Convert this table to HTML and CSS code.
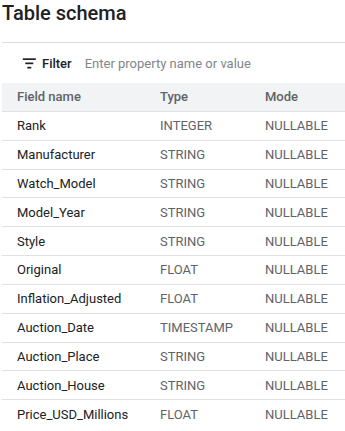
FILE: index.html
```html
<!DOCTYPE html>
<html>
<head>
<meta charset="utf-8">
<link rel="stylesheet" href="styles.css">
</head>
<body>
<h1 class="title">Table schema</h1>
<div class="schema">
  <div class="filter">
    <svg class="filter-icon" width="16" height="14" viewBox="0 0 16 14">
      <rect x="1.8" y="2.3" width="13" height="1.7" fill="#202124"/>
      <rect x="4.3" y="6.5" width="8" height="1.7" fill="#202124"/>
      <rect x="6.3" y="10.8" width="4" height="1.7" fill="#202124"/>
    </svg>
    <span class="filter-label">Filter</span>
    <span class="filter-input">Enter property name or value</span>
  </div>
  <div class="row head">
    <div class="cell">Field name</div>
    <div class="cell">Type</div>
    <div class="cell">Mode</div>
  </div>
  <div class="row"><div class="cell name">Rank</div><div class="cell">INTEGER</div><div class="cell">NULLABLE</div></div>
  <div class="row"><div class="cell name">Manufacturer</div><div class="cell">STRING</div><div class="cell">NULLABLE</div></div>
  <div class="row"><div class="cell name">Watch_Model</div><div class="cell">STRING</div><div class="cell">NULLABLE</div></div>
  <div class="row"><div class="cell name">Model_Year</div><div class="cell">STRING</div><div class="cell">NULLABLE</div></div>
  <div class="row"><div class="cell name">Style</div><div class="cell">STRING</div><div class="cell">NULLABLE</div></div>
  <div class="row"><div class="cell name">Original</div><div class="cell">FLOAT</div><div class="cell">NULLABLE</div></div>
  <div class="row"><div class="cell name">Inflation_Adjusted</div><div class="cell">FLOAT</div><div class="cell">NULLABLE</div></div>
  <div class="row"><div class="cell name">Auction_Date</div><div class="cell">TIMESTAMP</div><div class="cell">NULLABLE</div></div>
  <div class="row"><div class="cell name">Auction_Place</div><div class="cell">STRING</div><div class="cell">NULLABLE</div></div>
  <div class="row"><div class="cell name">Auction_House</div><div class="cell">STRING</div><div class="cell">NULLABLE</div></div>
  <div class="row"><div class="cell name">Price_USD_Millions</div><div class="cell">FLOAT</div><div class="cell">NULLABLE</div></div>
</div>
</body>
</html>
```
FILE: styles.css
```css
html, body {
  margin: 0;
  padding: 0;
  background: #ffffff;
  font-family: Roboto, "Liberation Sans", Arial, sans-serif;
  color: #202124;
  overflow: hidden;
}

.title {
  margin: 0 0 17px 2px;
  padding-top: 1px;
  font-size: 20px;
  line-height: 24px;
  font-weight: 500;
  color: #202124;
}

.schema {
  margin-left: 2px;
  border-top: 1px solid #dadce0;
}

.filter {
  height: 40px;
  display: flex;
  align-items: center;
  padding-left: 19px;
  font-size: 13px;
}

.filter-icon {
  display: block;
  margin-right: 5px;
}

.filter-label {
  font-weight: 500;
  color: #202124;
  margin-right: 13px;
}

.filter-input {
  color: #80868b;
}

.row {
  display: grid;
  grid-template-columns: 143px 105px 1fr;
  height: 28.85px;
  box-sizing: border-box;
  border-bottom: 1px solid #e0e0e0;
  align-items: center;
  font-size: 13px;
  color: #5f6368;
}

.row:last-child {
  border-bottom: none;
}

.row.head {
  background: #f1f3f4;
  font-weight: 500;
  color: #5f6368;
}

.cell {
  padding-left: 15px;
  white-space: nowrap;
}

.cell.name {
  color: #202124;
}
```
